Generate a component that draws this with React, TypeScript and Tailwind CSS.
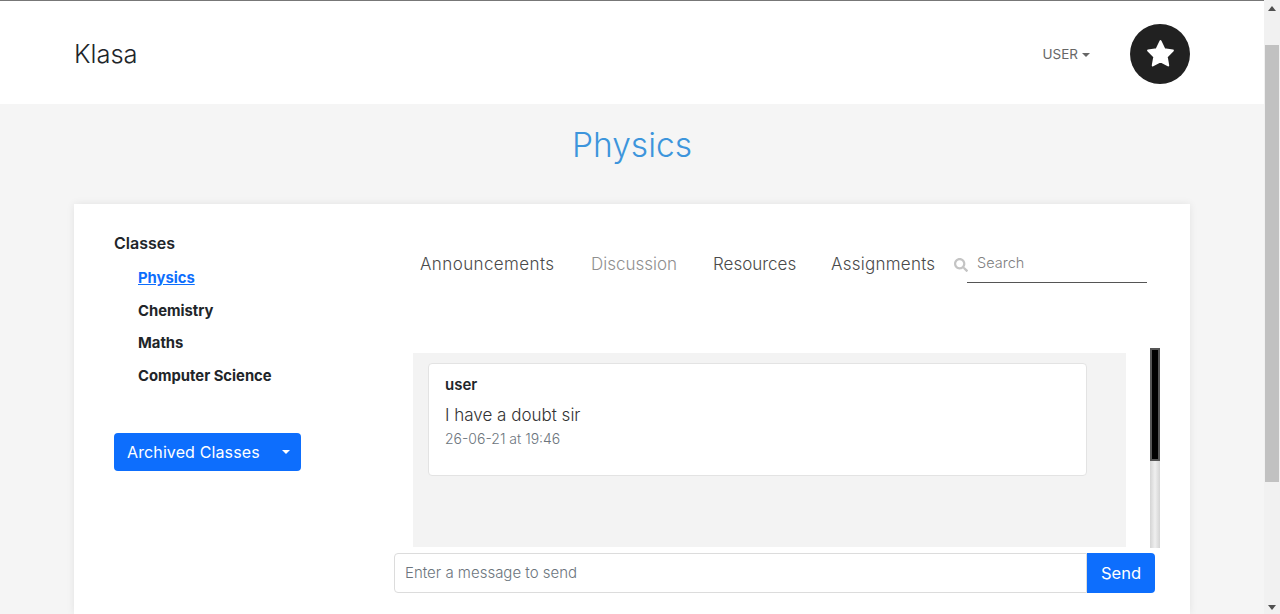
import React from 'react';

const font = "font-['Inter','Noto_Sans',sans-serif]";

const classes = ['Physics', 'Chemistry', 'Maths', 'Computer Science'];
const tabs = [
  { label: 'Announcements', color: 'text-[#4a4a4a] tracking-[0.4px]' },
  { label: 'Discussion', color: 'text-[#8f8f8f]' },
  { label: 'Resources', color: 'text-[#4a4a4a]' },
  { label: 'Assignments', color: 'text-[#4a4a4a] tracking-[0.25px]' },
];

const Caret = ({ className }: { className: string }) => (
  <span className={`inline-block border-x-[4px] border-t-[4px] border-x-transparent ${className}`} />
);

const PageScrollbar = () => (
  <div className="flex w-4 shrink-0 flex-col items-center bg-[#f1f1f1]">
    <div className="flex h-[45px] w-full justify-center pt-[6px]">
      <span className="h-0 w-0 border-x-[4px] border-b-[5px] border-x-transparent border-b-[#505050]" />
    </div>
    <div className="h-[437px] w-[14px] bg-[#c1c1c1]" />
    <div className="mt-auto pb-[4px]">
      <span className="block h-0 w-0 border-x-[4px] border-t-[5px] border-x-transparent border-t-[#505050]" />
    </div>
  </div>
);

const Sidebar = () => (
  <aside className="w-[280px] shrink-0 pt-[28px]">
    <h3 className="text-[16px] leading-[22px] font-semibold text-[#212529]">Classes</h3>
    <ul className="mt-[8px] pl-[24px]">
      {classes.map((name, i) => (
        <li key={name} className="flex h-[32.6px] items-center">
          <a className={`text-[14.8px] font-bold ${i === 0 ? 'text-[#0d6efd] underline' : 'text-[#212529]'}`}>{name}</a>
        </li>
      ))}
    </ul>
    <button className="mt-[41px] flex h-[38px] w-[187px] items-center rounded-[4px] bg-[#0d6efd] pl-[13px] text-[16px] tracking-[0.12px] text-white">
      Archived Classes
      <Caret className="ml-[22px] border-t-white" />
    </button>
  </aside>
);

const Tabs = () => (
  <div className="flex h-[78px] items-start pl-[26px] pt-[21px]">
    <div className="mt-[1px] grid grid-cols-[171px_122px_118px_123px]">
      {tabs.map((tab) => (
        <a key={tab.label} className={`text-[17px] leading-[24px] font-light whitespace-nowrap ${tab.color}`}>
          {tab.label}
        </a>
      ))}
    </div>
    <svg className="mt-[7px] h-[14px] w-[14px] shrink-0 text-[#c4c4c4]" viewBox="0 0 512 512" fill="currentColor">
      <path d="M505 442.7 405.3 343c-4.5-4.5-10.6-7-17-7H372c27.6-35.3 44-79.7 44-128C416 93.1 322.9 0 208 0S0 93.1 0 208s93.1 208 208 208c48.3 0 92.7-16.4 128-44v16.3c0 6.400 2.500 12.500 7 17l99.700 99.700c9.400 9.400 24.600 9.400 33.900 0l28.300-28.300c9.400-9.400 9.400-24.600.1-34zM208 336c-70.700 0-128-57.200-128-128 0-70.700 57.200-128 128-128 70.700 0 128 57.200 128 128 0 70.700-57.200 128-128 128z" />
    </svg>
    <div className="ml-[-1px] h-[32px] w-[180px] border-b border-[#555] pl-[10px] text-[14.5px] leading-[24px] font-light text-[#808080]">
      Search
    </div>
  </div>
);

const Message = () => (
  <div className="h-[113px] w-[659px] rounded-[4px] border border-[#e3e3e3] bg-white px-[16px] pt-[11px]">
    <p className="text-[15px] leading-[20px] font-semibold text-[#212529]">user</p>
    <p className="mt-[9px] text-[17px] leading-[22px] font-light text-[#333]">I have a doubt sir</p>
    <p className="mt-[4px] text-[14px] leading-[18px] font-light text-[#6c757d]">26-06-21 at 19:46</p>
  </div>
);

const Discussion = () => (
  <div className="flex h-[200px] items-start pl-[19px]">
    <div className="mt-[5px] h-[194px] w-[713px] bg-[#f3f3f3] pl-[15px] pt-[10px]">
      <Message />
    </div>
    <div className="ml-[24px] h-[200px] w-[10px] bg-gradient-to-r from-[#d4d4d4] via-[#efefef] to-[#d4d4d4]">
      <div className="h-[113px] border-2 border-[#555] bg-black" />
    </div>
  </div>
);

const SendBar = () => (
  <div className="mt-[5px] flex h-[40px] w-[761px]">
    <div className="flex w-[693px] items-center rounded-l-[4px] border border-[#dcdcdc] bg-white pl-[10px] text-[15px] font-light text-[#6c757d]">
      Enter a message to send
    </div>
    <button className="w-[68px] rounded-r-[4px] bg-[#0d6efd] text-[16.5px] text-white">Send</button>
  </div>
);

export default function App() {
  return (
    <div className={`flex h-[614px] w-[1280px] overflow-hidden bg-[#f5f5f5] ${font}`}>
      <div className="flex min-w-0 flex-1 flex-col">
        <header className="flex h-[104px] shrink-0 items-center border-t border-[#777] bg-white px-[74px] pt-[2px]">
          <span className="mt-[2px] text-[25.5px] font-light text-[#212529]">Klasa</span>
          <span className="mt-[2px] ml-auto flex items-center text-[13.5px] text-[#666]">
            USER
            <Caret className="ml-[4px] border-t-[#666]" />
          </span>
          <span className="ml-[40px] flex h-[60px] w-[60px] items-center justify-center rounded-full bg-[#212121]">
            <svg className="h-[33px] w-[33px]" viewBox="0 0 24 24" fill="white" stroke="white" strokeWidth="1.5" strokeLinejoin="round">
              <path d="M12 3l2.800 5.900 6.200.9-4.500 4.500 1.100 6.400L12 17.700l-5.600 3 1.100-6.400L3 9.800l6.200-.9z" />
            </svg>
          </span>
        </header>
        <h1 className="flex h-[100px] shrink-0 items-start justify-center pt-[20px] text-[33.5px] leading-[42px] font-light text-[#3d95dc]">
          Physics
        </h1>
        <section className="mx-[74px] flex flex-1 bg-white pl-[40px] shadow-[0_0_8px_rgba(0,0,0,0.08)]">
          <Sidebar />
          <div className="min-w-0 flex-1 pt-[26px]">
            <Tabs />
            <div className="mt-[40px]">
              <Discussion />
              <SendBar />
            </div>
          </div>
        </section>
      </div>
      <PageScrollbar />
    </div>
  );
}
